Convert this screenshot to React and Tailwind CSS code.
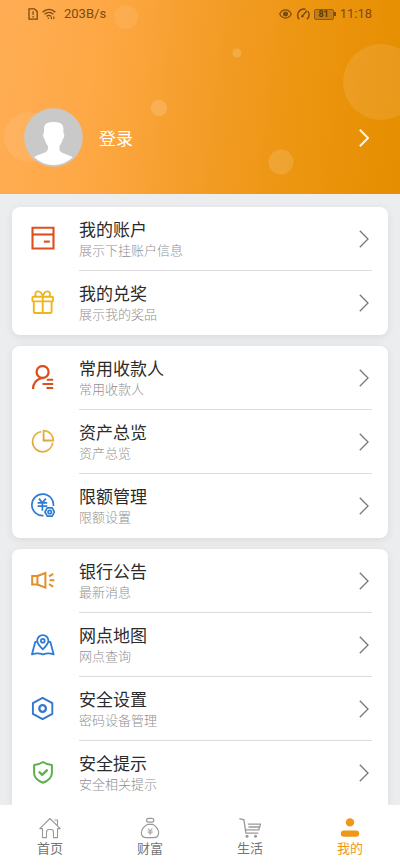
function AccountIcon() {
  return (
    <svg viewBox="0 0 24 24" className="h-6 w-6" fill="none" stroke="#de4f1c" strokeWidth="2.1">
      <path d="M1.5 1.7h21v20.8h-21z" />
      <path d="M1.5 8.5h21" />
      <path d="M12.8 15.6h6" />
    </svg>
  );
}

function GiftIcon() {
  return (
    <svg viewBox="0 0 24 24" className="h-6 w-6" fill="none" stroke="#f0b51a" strokeWidth="1.9" strokeLinejoin="round">
      <rect x="1.4" y="6.8" width="20.6" height="4.6" rx="1" />
      <path d="M2.8 11.4V22a1 1 0 0 0 1 1h15.8a1 1 0 0 0 1-1V11.4" />
      <path d="M11.7 7v16" />
      <path d="M5.2 6.8C3.4 4.5 4.4 1.4 7 1.4c2.600 0 4.100 2.600 4.700 5.400.6-2.800 2.100-5.400 4.700-5.400s3.600 3.100 1.800 5.400" />
    </svg>
  );
}

function PayeeIcon() {
  return (
    <svg viewBox="0 0 24 24" className="h-6 w-6" fill="none" stroke="#dc4f1c" strokeWidth="2.3">
      <circle cx="11.6" cy="7" r="6" />
      <path d="M2 24.200c.2-5.600 3-9.600 8.400-11.100" />
      <path d="M15.800 14.800h6.400M11.500 19h10.700M15.500 23h6.700" strokeWidth="1.900" />
    </svg>
  );
}

function AssetsIcon() {
  return (
    <svg viewBox="0 0 24 24" className="h-6 w-6" fill="none" strokeWidth="1.8">
      <linearGradient id="pie" x1="0" y1="1" x2="1" y2="0">
        <stop offset="0" stopColor="#dda23a" />
        <stop offset="1" stopColor="#efc04a" />
      </linearGradient>
      <path stroke="url(#pie)" d="M10.300 2.700A10.100 10.100 0 1 0 21.700 13.500" />
      <path stroke="url(#pie)" d="M12.600 1.600v9.900h9.700A9.800 9.800 0 0 0 12.600 1.600z" />
    </svg>
  );
}

function LimitIcon() {
  return (
    <svg viewBox="0 0 24 24" className="h-6 w-6" fill="none" stroke="#2f7cd3" strokeWidth="1.700">
      <path d="M12.500 22.600A10.800 10.800 0 1 1 22.400 13" />
      <path d="M8 5.600l3.400 4.200 3.400-4.200M6.600 9.900h9.600M6.600 13.100h9.600M11.400 9.800v8" />
      <path d="M16.300 14.900h4.800l2.400 4.100-2.400 4.100h-4.800L13.900 19z" fill="#fff" />
      <circle cx="18.700" cy="19" r="1.700" />
    </svg>
  );
}

function NoticeIcon() {
  return (
    <svg viewBox="0 0 24 24" className="h-6 w-6" fill="none" stroke="#e38f2a" strokeWidth="2">
      <path d="M1.200 8h5.200v8.400H1.200z" />
      <path d="M6.400 8l8-3v14.600l-8-3.100" />
      <path d="M18.600 12.200h4.800M18 8.300l4.200-2.500M18 16.200l4.200 2.500" />
    </svg>
  );
}

function MapIcon() {
  return (
    <svg viewBox="0 0 24 24" className="h-6 w-6" fill="none" stroke="#2f7cd3" strokeWidth="1.800" strokeLinejoin="round">
      <path d="M5.800 9.800H4.300L1 22.300c3.600-1.300 7.400-1.300 11 0 3.600-1.300 7.400-1.300 10.600 0L19.300 9.800h-1.500" />
      <path d="M11.800 17.300C8 13.600 6.200 11.200 6.200 8.700a5.600 5.600 0 0 1 11.200 0c0 2.500-1.800 4.900-5.600 8.600z" />
      <circle cx="11.800" cy="8.700" r="1.900" />
    </svg>
  );
}

function SettingsIcon() {
  return (
    <svg viewBox="0 0 24 24" className="h-6 w-6" fill="none" stroke="#3478cb" strokeWidth="1.900">
      <path d="M11.600 1.800l9.700 5.300v10.800l-9.700 5.300-9.700-5.300V7.100z" />
      <circle cx="11.600" cy="12.500" r="3.300" strokeWidth="2.300" />
    </svg>
  );
}

function ShieldIcon() {
  return (
    <svg viewBox="0 0 24 24" className="h-6 w-6" fill="none" stroke="#5fae4c" strokeWidth="2" strokeLinejoin="round">
      <path d="M12 2c2.600 1.800 5.400 2.700 8.900 2.900v8c0 4.600-3.400 7.600-8.900 9.800-5.500-2.200-8.900-5.200-8.900-9.800v-8C6.600 4.700 9.400 3.800 12 2z" />
      <path d="M7.900 11.600l3.300 3.300 5.400-5.300" strokeWidth="2.200" />
    </svg>
  );
}

function Chevron({ className }) {
  return (
    <svg viewBox="0 0 10 18" className={`h-[18px] w-[10px] shrink-0 ${className}`} fill="none" stroke="currentColor">
      <path d="M.8.8L9 9 .8 17.200" />
    </svg>
  );
}

const groups = [
  [
    { title: "我的账户", note: "展示下挂账户信息", icon: AccountIcon },
    { title: "我的兑奖", note: "展示我的奖品", icon: GiftIcon },
  ],
  [
    { title: "常用收款人", note: "常用收款人", icon: PayeeIcon },
    { title: "资产总览", note: "资产总览", icon: AssetsIcon },
    { title: "限额管理", note: "限额设置", icon: LimitIcon },
  ],
  [
    { title: "银行公告", note: "最新消息", icon: NoticeIcon },
    { title: "网点地图", note: "网点查询", icon: MapIcon },
    { title: "安全设置", note: "密码设备管理", icon: SettingsIcon },
    { title: "安全提示", note: "安全相关提示", icon: ShieldIcon },
  ],
];

function StatusBar() {
  return (
    <div className="relative flex h-7 items-center justify-between px-7 font-[Roboto,sans-serif] text-[13px] text-[#7d4a12]">
      <div className="flex items-center">
        <svg viewBox="0 0 10 12" className="h-3 w-[10px]" fill="none" stroke="currentColor" strokeWidth="1.300">
          <path d="M1 .8h5.400L9.200 3.400v7.800H1z" />
          <path d="M5.100 3.200v3.600M5.100 8v1.400" />
        </svg>
        <svg viewBox="0 0 14 12" className="ml-1 h-3 w-[14px]" fill="none" stroke="currentColor" strokeWidth="1.300">
          <path d="M.6 4.200c3.800-3.900 9-3.900 12.800 0M2.600 6.400c2.600-2.600 6.200-2.600 8.800 0M4.600 8.500c1.400-1.400 3.100-1.400 4.200-.3" />
          <circle cx="6.400" cy="10.300" r=".8" fill="currentColor" stroke="none" />
          <path d="M9.400 8.400v2.800M11.800 8.400v2.800" strokeWidth="1.100" />
        </svg>
        <span className="ml-2">203B/s</span>
      </div>
      <div className="flex items-center">
        <svg viewBox="0 0 13 10" className="h-[10px] w-[13px]" fill="none" stroke="currentColor" strokeWidth="1.200">
          <path d="M.7 5C3.500-.4 9.500-.4 12.300 5 9.500 10.400 3.500 10.400.7 5z" />
          <circle cx="6.500" cy="5" r="2" fill="currentColor" />
        </svg>
        <svg viewBox="0 0 14 12" className="ml-1 h-3 w-[14px]" fill="none" stroke="currentColor" strokeWidth="1.400">
          <path d="M3.200 11.300A6.200 6.200 0 0 1 9.500 1.300M12 3.400a6.200 6.200 0 0 1-1.200 7.900" />
          <path d="M6.200 8.200L11 2.600" strokeWidth="1.500" />
          <circle cx="6.300" cy="8.200" r="1.200" fill="currentColor" stroke="none" />
        </svg>
        <span className="ml-1 flex items-center">
          <span className="flex h-[11px] w-5 items-center justify-center rounded-[2px] border border-[#8a5a1c] bg-[#8a5a1c]/40 text-[9px] font-bold leading-none text-[#5f3608]">
            81
          </span>
          <span className="h-1 w-[2px] bg-[#7d4a12]" />
        </span>
        <span className="ml-1">11:18</span>
      </div>
    </div>
  );
}

function Bubbles() {
  return (
    <svg
      viewBox="0 0 400 194"
      preserveAspectRatio="xMaxYMid slice"
      className="absolute inset-0 h-full w-full"
      fill="#fff"
      aria-hidden="true"
    >
      <circle cx="126" cy="17" r="12" opacity=".08" />
      <circle cx="29" cy="137" r="25" opacity=".09" />
      <circle cx="159" cy="108" r="8" opacity=".16" />
      <circle cx="237" cy="53" r="4.500" opacity=".16" />
      <circle cx="281" cy="162" r="12.500" opacity=".13" />
      <circle cx="381" cy="82" r="38" opacity=".1" />
    </svg>
  );
}

function Header() {
  return (
    <header className="relative overflow-hidden bg-[linear-gradient(97deg,#ffad55_0%,#fea845_25%,#f49d29_50%,#ec950f_75%,#e68e00_100%)] pb-[26px]">
      <Bubbles />
      <StatusBar />
      <a href="#login" className="relative mt-20 flex items-center pl-6 pr-[31px] text-white">
        <svg viewBox="0 0 60 60" className="h-[60px] w-[60px]" aria-hidden="true">
          <clipPath id="face">
            <circle cx="29.500" cy="29.500" r="27.500" />
          </clipPath>
          <circle cx="29.500" cy="29.500" r="29.300" fill="#c9c9c9" />
          <path
            clipPath="url(#face)"
            fill="#fff"
            d="M20 20.500c0-4.500 3.400-6.500 9.700-6.500s9.700 2 9.700 6.500v4.500c1.300.2 1.200 4.800-.7 6.200-.7 3-1.800 5-3.200 6.500v4.300c1 2.600 3.500 3.200 6.500 4.200 4.500 1.500 7 3 10 5.300L45 60H15L7 51c3.500-2.300 6-3.800 10.500-5.300 3-1 5.400-1.600 6.400-4.200v-3.800c-1.400-1.500-2.500-3.500-3.200-6.500-1.900-1.400-2-6-.7-6.200z"
          />
        </svg>
        <span className="ml-[15px] flex-1 text-[17px] leading-6">登录</span>
        <Chevron className="stroke-2 text-[#fff6dc]" />
      </a>
    </header>
  );
}

function MenuRow({ item }) {
  const Icon = item.icon;

  return (
    <li className="group">
      <a href="#menu" className="flex h-16 items-stretch pl-[19px] pr-4">
        <span className="flex w-12 items-center pb-[2px]">
          <Icon />
        </span>
        <span className="flex flex-1 items-center border-b border-[#dcdcde] pr-[3px] group-last:border-transparent">
          <span className="flex flex-1 flex-col pb-[2px]">
            <span className="text-[17px] leading-6 text-[#2b2b2b]">{item.title}</span>
            <span className="text-[13px] font-light leading-[18px] text-[#8f8f8f]">{item.note}</span>
          </span>
          <Chevron className="stroke-[1.3] text-[#777]" />
        </span>
      </a>
    </li>
  );
}

function TabBar() {
  const tab = "flex flex-1 flex-col items-center pt-3 text-[13px] leading-[18px]";

  return (
    <nav className="sticky bottom-0 flex h-[61px] bg-white text-[#757575]">
      <a href="#home" className={tab}>
        <svg viewBox="0 0 22 22" className="h-[22px] w-[22px]" fill="none" stroke="#999" strokeWidth="1.100" strokeLinejoin="round">
          <path d="M.8 11.600L11 1.500l10.200 10.100h-2.700v9h-4v-5.200c0-2-1-2.900-2.300-2.900h-2.400c-1.300 0-2.300.9-2.300 2.900v5.200h-4v-9z" />
          <path d="M15.500 3h3v5.500" />
        </svg>
        首页
      </a>
      <a href="#wealth" className={tab}>
        <svg viewBox="0 0 22 22" className="h-[22px] w-[22px]" fill="none" stroke="#999" strokeWidth="1.200">
          <rect x="7.600" y="1.400" width="7.200" height="3.800" rx="1.900" />
          <path d="M8.800 7.300h4.800c3.500 2 6 5.400 6 8.600 0 3-2 4.700-5 4.700H7.400c-3 0-5-1.700-5-4.700 0-3.200 2.900-6.600 6.400-8.600z" />
          <path d="M9 11.200l2.200 2.700 2.200-2.700M8.800 14h4.800M8.800 15.800h4.800M11.200 14v4" strokeWidth=".9" />
        </svg>
        财富
      </a>
      <a href="#life" className={tab}>
        <svg viewBox="0 0 22 22" className="h-[22px] w-[22px]" fill="none" stroke="#999" strokeWidth="1.300">
          <path d="M.3 1.600l4.600 1.200 2 13.400h12.500" />
          <path d="M9 7.200h12.500l-1.700 5.700H6.600M9.500 10h11" />
          <circle cx="8" cy="19.300" r="1.500" fill="#999" stroke="none" />
          <circle cx="16.500" cy="19.300" r="1.500" fill="#999" stroke="none" />
        </svg>
        生活
      </a>
      <a href="#mine" className={`${tab} text-[#ef961b]`} aria-current="page">
        <svg viewBox="0 0 22 22" className="h-[22px] w-[22px]" fill="#ef961b">
          <circle cx="11" cy="5.400" r="4.200" />
          <rect x="1.800" y="13.400" width="18.400" height="6.400" rx="3.200" />
        </svg>
        我的
      </a>
    </nav>
  );
}

export default function App() {
  return (
    <div className="flex min-h-screen flex-col bg-[#ecedef] font-['Noto_Sans_CJK_SC',sans-serif]">
      <Header />
      <main className="flex flex-1 flex-col gap-[11px] px-3 pt-[13px]">
        {groups.map((items) => (
          <ul key={items[0].title} className="rounded-lg bg-white shadow-[0_2px_8px_rgba(0,0,0,0.08)] last:rounded-b-none">
            {items.map((item) => (
              <MenuRow key={item.title} item={item} />
            ))}
          </ul>
        ))}
      </main>
      <TabBar />
    </div>
  );
}
